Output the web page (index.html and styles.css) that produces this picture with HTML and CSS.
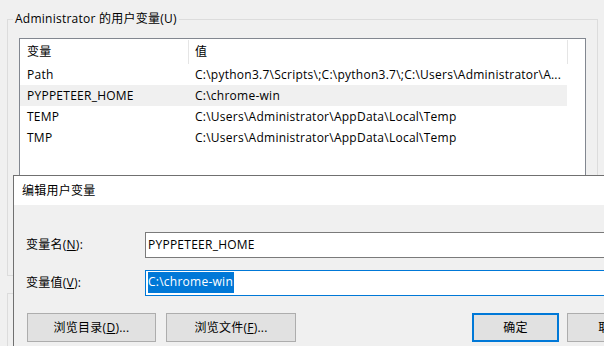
FILE: index.html
```html
<!DOCTYPE html>
<html lang="zh-CN">
<head>
<meta charset="utf-8">
<title>编辑用户变量</title>
<link rel="stylesheet" href="styles.css">
</head>
<body>
<div class="window">
  <fieldset class="group group-user">
    <legend class="group-label">Administrator 的用户变量(U)</legend>
    <div class="listview">
      <div class="lv-header">
        <div class="lv-col col-name">变量</div>
        <div class="lv-col col-value">值</div>
      </div>
      <div class="lv-row">
        <div class="cell col-name">Path</div>
        <div class="cell col-value">C:\python3.7\Scripts\;C:\python3.7\;C:\Users\Administrator\A...</div>
      </div>
      <div class="lv-row lv-row-selected">
        <div class="cell col-name">PYPPETEER_HOME</div>
        <div class="cell col-value">C:\chrome-win</div>
      </div>
      <div class="lv-row">
        <div class="cell col-name">TEMP</div>
        <div class="cell col-value">C:\Users\Administrator\AppData\Local\Temp</div>
      </div>
      <div class="lv-row">
        <div class="cell col-name">TMP</div>
        <div class="cell col-value">C:\Users\Administrator\AppData\Local\Temp</div>
      </div>
    </div>
  </fieldset>
  <fieldset class="group group-system"></fieldset>

  <div class="dialog">
    <div class="titlebar">编辑用户变量</div>
    <div class="dlg-body">
      <div class="field">
        <span class="field-label">变量名(<u>N</u>):</span>
        <div class="input">PYPPETEER_HOME</div>
      </div>
      <div class="field field-second">
        <span class="field-label">变量值(<u>V</u>):</span>
        <div class="input input-focused"><span class="selection">C:\chrome-win</span></div>
      </div>
      <div class="buttons">
        <div class="btn btn-browse-dir">浏览目录(<u>D</u>)...</div>
        <div class="btn btn-browse-file">浏览文件(<u>F</u>)...</div>
        <div class="btn btn-ok">确定</div>
        <div class="btn btn-cancel">取消</div>
      </div>
    </div>
  </div>
</div>
</body>
</html>
```

FILE: styles.css
```css
html, body {
  margin: 0;
  padding: 0;
}
body {
  background: #f0f0f0;
  font-family: "Open Sans", "Noto Sans CJK SC", sans-serif;
  font-size: 12px;
  line-height: 16px;
  letter-spacing: 0.25px;
  color: #000;
  width: 604px;
  height: 346px;
  overflow: hidden;
}
.window {
  position: relative;
  width: 604px;
  height: 346px;
  overflow: hidden;
}
.group {
  margin: 11px 0 0 7px;
  padding: 0 0 37px 0;
  width: 589px;
  border: 1px solid #dcdcdc;
  min-width: 0;
  box-sizing: content-box;
}
.group-label {
  margin-left: 5px;
  padding: 0 2px;
  line-height: 16px;
  white-space: nowrap;
}
.group-system {
  margin-top: 17px;
  height: 100px;
  padding: 0;
}
.listview {
  margin: 11px 0 0 11px;
  width: 567px;
  height: 200px;
  box-sizing: border-box;
  border: 1px solid #828790;
  background: #fff;
}
.lv-header {
  display: flex;
  height: 25px;
  padding-top: 1px;
  box-sizing: border-box;
}
.lv-col {
  height: 24px;
  line-height: 23px;
  border-right: 1px solid #e5e5e5;
  box-sizing: border-box;
}
.col-name {
  width: 169px;
  padding-left: 7px;
  box-sizing: border-box;
  flex: none;
}
.col-value {
  width: 378px;
  padding-left: 6px;
  box-sizing: border-box;
  flex: none;
}
.lv-header .col-value {
  width: 379px;
}
.lv-row {
  display: flex;
  width: 547px;
  height: 21px;
  line-height: 21px;
}
.lv-row-selected {
  background: #f0f0f0;
}
.cell {
  white-space: nowrap;
  overflow: hidden;
}

.dialog {
  position: absolute;
  left: 13px;
  top: 175px;
  width: 640px;
  height: 200px;
  border: 1px solid #707070;
  background: #f0f0f0;
}
.titlebar {
  height: 29px;
  line-height: 29px;
  background: #fff;
  padding-left: 8px;
}
.dlg-body {
  padding: 27px 0 0 12px;
}
.field {
  display: flex;
  align-items: center;
  height: 26px;
}
.field-second {
  margin-top: 12px;
}
.field-label {
  width: 119px;
  flex: none;
}
.input {
  width: 480px;
  height: 26px;
  box-sizing: border-box;
  border: 1px solid #7a7a7a;
  background: #fff;
  padding-left: 2px;
  line-height: 23px;
  white-space: nowrap;
}
.input-focused {
  border-color: #0078d7;
}
.selection {
  display: inline-block;
  margin-top: 1px;
  height: 21px;
  line-height: 20px;
  background: #0078d7;
  color: #fff;
  padding-right: 1px;
  vertical-align: top;
}
.buttons {
  display: flex;
  margin-top: 17px;
  padding-left: 1px;
}
.btn {
  height: 29px;
  box-sizing: border-box;
  border: 1px solid #adadad;
  background: #e1e1e1;
  text-align: center;
  line-height: 27px;
  flex: none;
}
.btn-browse-dir {
  width: 129px;
}
.btn-browse-file {
  width: 130px;
  margin-left: 10px;
}
.btn-ok {
  width: 87px;
  margin-left: 176px;
  border: 2px solid #0078d7;
  line-height: 25px;
}
.btn-cancel {
  width: 87px;
  margin-left: 8px;
}
```
